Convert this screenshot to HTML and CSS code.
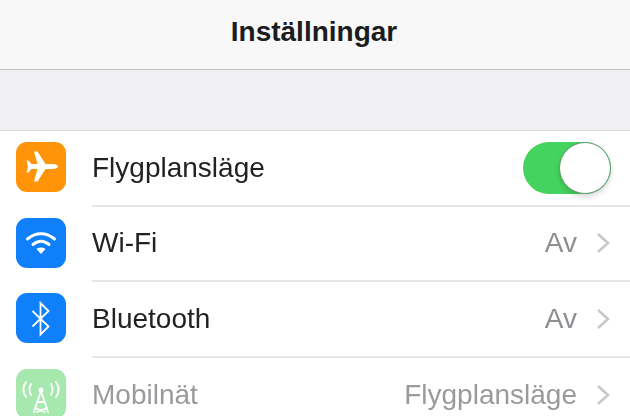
FILE: index.html

```html
<!DOCTYPE html>
<html lang="sv">
<head>
    <meta charset="UTF-8">
    <meta name="viewport" content="width=device-width, initial-scale=1.0">
    <title>Inställningar</title>
    <link rel="stylesheet" href="styles.css">
</head>
<body>
    <div class="navbar">
        <h1>Inställningar</h1>
    </div>

    <div class="spacer"></div>

    <div class="list">
        <div class="row">
            <div class="icon icon-orange">
                <svg viewBox="0 0 50 50" width="50" height="50">
                    <path fill="#fff" d="M42 24.500c0-1.200-2.500-2.500-5-2.500h-7.500L21.500 9.500H18l3.500 12.500h-6l-3-3.500h-2l1.500 6-1.500 6h2l3-3.500h6L18 39.500h3.500l8-12.500H37c2.500 0 5-1.300 5-2.500z"/>
                </svg>
            </div>
            <div class="row-body">
                <span class="label">Flygplansläge</span>
                <div class="toggle"><div class="knob"></div></div>
            </div>
        </div>
        <div class="row">
            <div class="icon icon-blue">
                <svg viewBox="0 0 50 50" width="50" height="50">
                    <g fill="none" stroke="#fff" stroke-width="3" stroke-linecap="round">
                        <path d="M11.500 21c8-7 19-7 27 0"/>
                        <path d="M17 26.500c5-4.200 11-4.200 16 0"/>
                    </g>
                    <path fill="#fff" d="M20.500 31c2.600-2 6.400-2 9 0L25 36z"/>
                </svg>
            </div>
            <div class="row-body">
                <span class="label">Wi-Fi</span>
                <span class="value">Av</span>
                <svg class="chevron" viewBox="0 0 14 22" width="14" height="22"><path d="M2 2l10 9-10 9"/></svg>
            </div>
        </div>
        <div class="row">
            <div class="icon icon-blue">
                <svg viewBox="0 0 50 50" width="50" height="50">
                    <path fill="none" stroke="#fff" stroke-width="1.800" d="M16.500 18l16 15.500-8 8V10l8 8-16 15.500"/>
                </svg>
            </div>
            <div class="row-body">
                <span class="label">Bluetooth</span>
                <span class="value">Av</span>
                <svg class="chevron" viewBox="0 0 14 22" width="14" height="22"><path d="M2 2l10 9-10 9"/></svg>
            </div>
        </div>
        <div class="row row-disabled">
            <div class="icon icon-green">
                <svg viewBox="0 0 50 50" width="50" height="50">
                    <g fill="none" stroke="#fff" stroke-width="1.800" stroke-linecap="round">
                        <path d="M10 13c-3.500 5-3.500 10 0 15"/>
                        <path d="M15 15c-2 3.500-2 7.500 0 11"/>
                        <path d="M40 13c3.500 5 3.500 10 0 15"/>
                        <path d="M35 15c2 3.500 2 7.500 0 11"/>
                        <path d="M25 22l-7 21M25 22l7 21M21 33h8M19 39l10 4M31 39l-10 4"/>
                    </g>
                    <circle cx="25" cy="21" r="2.500" fill="#fff"/>
                </svg>
            </div>
            <div class="row-body">
                <span class="label">Mobilnät</span>
                <span class="value">Flygplansläge</span>
                <svg class="chevron" viewBox="0 0 14 22" width="14" height="22"><path d="M2 2l10 9-10 9"/></svg>
            </div>
        </div>
    </div>
</body>
</html>
```

FILE: styles.css

```css
* {
    margin: 0;
    padding: 0;
    box-sizing: border-box;
}

html, body {
    height: 416px;
    overflow: hidden;
}

body {
    font-family: 'Liberation Sans', Arial, sans-serif;
    background: white;
    color: #222;
    filter: blur(0.4px);
}

.navbar {
    height: 70px;
    padding-bottom: 6px;
    background: #f8f8f9;
    border-bottom: 1px solid #c4c4c6;
    display: flex;
    align-items: center;
    justify-content: center;
}

.navbar h1 {
    font-size: 28px;
    font-weight: bold;
    color: #1c1c1e;
    margin-left: -2px;
}

.spacer {
    height: 61px;
    background: #efeff4;
    border-bottom: 1px solid #dcdce0;
}

.row {
    display: flex;
    height: 75.500px;
    padding-left: 16px;
}

.icon {
    width: 50px;
    height: 50px;
    flex-shrink: 0;
    margin-top: 11px;
    border-radius: 11px;
}

.icon svg {
    display: block;
}

.icon-orange {
    background: #ff9408;
}

.icon-blue {
    background: #0f7ffa;
}

.icon-green {
    background: #a6e8ae;
}

.row-body {
    flex: 1;
    display: flex;
    align-items: center;
    margin-left: 26px;
    padding-right: 20px;
    border-bottom: 2px solid #e6e6e8;
}

.row:last-child .row-body {
    border-bottom: none;
}

.label {
    flex: 1;
    font-size: 28px;
}

.value {
    font-size: 28px;
    color: #8e8e93;
    margin-right: 19px;
}

.chevron path {
    fill: none;
    stroke: #c7c7cc;
    stroke-width: 2.500;
}

.toggle {
    width: 88px;
    height: 52px;
    border-radius: 26px;
    background: #44d35f;
    display: flex;
    justify-content: flex-end;
    margin-right: -1px;
}

.knob {
    width: 52px;
    height: 52px;
    border-radius: 50%;
    background: white;
    border: 1.500px solid #5f9a6c;
    box-shadow: 0 3px 5px rgba(0, 0, 0, 0.15);
}

.row-disabled .label,
.row-disabled .value {
    color: #9a9a9e;
}
```
